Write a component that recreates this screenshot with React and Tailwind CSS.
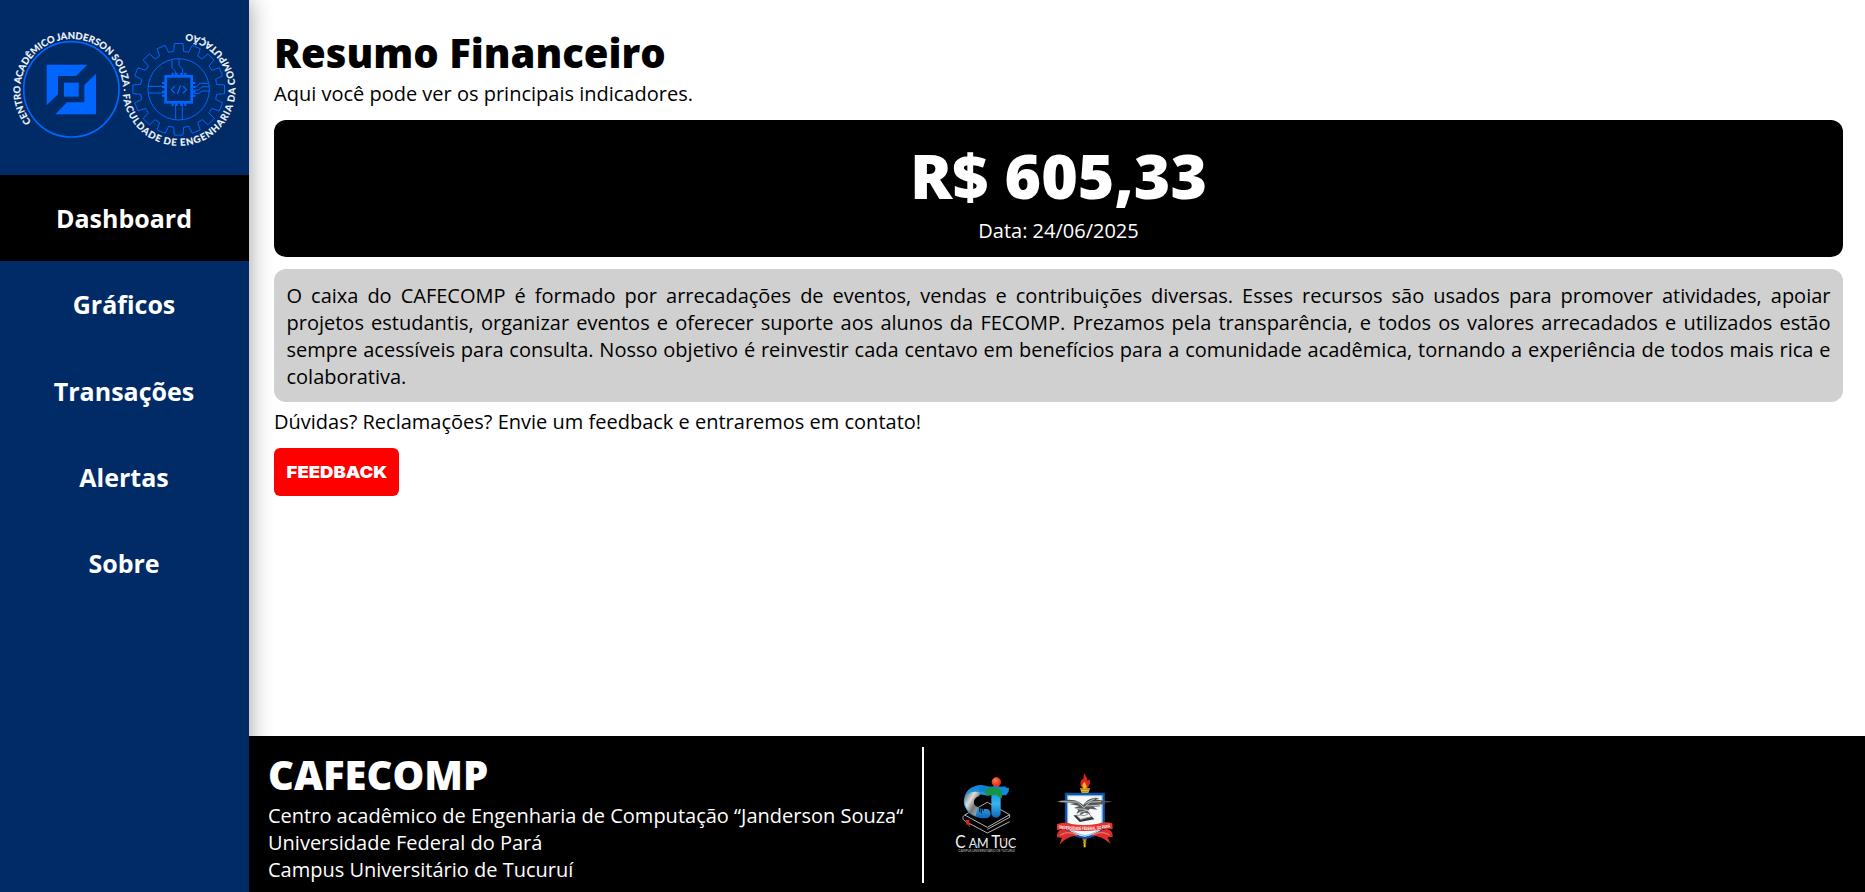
import React from "react";

const NAV = ["Dashboard", "Gráficos", "Transações", "Alertas", "Sobre"];

function gearPath(cx, cy, teeth) {
  const step = (Math.PI * 2) / teeth;
  const pts = [];
  for (let i = 0; i < teeth; i++) {
    const a = i * step - Math.PI / 2;
    [[-0.128, 115], [-0.095, 138], [0.095, 138], [0.128, 115]].forEach(([d, r]) => {
      pts.push(`${(cx + r * Math.cos(a + d)).toFixed(1)} ${(cy + r * Math.sin(a + d)).toFixed(1)}`);
    });
  }
  return `M${pts.join("L")}Z`;
}

function BrandLogo() {
  return (
    <svg className="h-[150px] w-[249px] shrink-0" viewBox="0 0 747 450" fill="none">
      <defs>
        <path id="arcLeft" d="M94 321A154 154 0 1 1 369 223" />
        <path id="arcRight" d="M368 223A169 169 0 1 0 551 55" />
      </defs>
      <g fontFamily="Lato, sans-serif" fontWeight="700" fontSize="28.5" fill="#f4f7ff" stroke="#f4f7ff" strokeWidth=".5" wordSpacing="-1.5">
        <text>
          <textPath href="#arcLeft" textLength="576" lengthAdjust="spacing">CENTRO ACADÊMICO JANDERSON SOUZA</textPath>
        </text>
        <text>
          <textPath href="#arcRight" startOffset="15" textLength="760" lengthAdjust="spacing">FACULDADE DE ENGENHARIA DA COMPUTAÇÃO</textPath>
        </text>
      </g>
      <circle cx="374" cy="225" r="3" fill="#f4f7ff" />
      <circle cx="214" cy="223" r="143" stroke="#0066ff" strokeWidth="5" />
      <g fill="#0066ff">
        <path d="M140 149H262L228 183H174V238L140 271Z" />
        <path d="M288 176V298H166L201 262H253V210Z" />
        <rect x="192" y="203" width="44" height="42" />
      </g>
      <g stroke="#0066ff" strokeWidth="3" strokeLinejoin="round">
        <path d={gearPath(536, 223, 16)} />
        <circle cx="536" cy="223" r="92" />
        <path d="M516 134V158L526 169V180M537 131V151L548 162V180M527 266V314M547 266V314M446 214H494M446 234H494" />
        <path d="M580 215H590L599 205H626M580 225H596L606 215H629M580 235H597L606 228H629" />
      </g>
      <rect x="497" y="184" width="78" height="78" stroke="#0066ff" strokeWidth="8" />
      <path d="M518 173V182M530 173V182M544 173V182M556 173V182M518 264V273M530 264V273M544 264V273M556 264V273M486 204H495M486 216H495M486 230H495M486 242H495M577 204H586M577 216H586M577 230H586M577 242H586" stroke="#0066ff" strokeWidth="6" />
      <path d="M525 213L514 224L525 235M548 213L560 224L548 235M542 211L532 237" stroke="#0066ff" strokeWidth="3.5" />
    </svg>
  );
}

function CamTucLogo() {
  return (
    <svg className="h-[80px] w-[64px]" viewBox="72 44 192 240" fill="none">
      <defs>
        <linearGradient id="steel" x1="0" y1="0" x2="1" y2="1">
          <stop offset="0" stopColor="#555" />
          <stop offset=".35" stopColor="#ddd" />
          <stop offset=".6" stopColor="#777" />
          <stop offset="1" stopColor="#bbb" />
        </linearGradient>
        <linearGradient id="sky" gradientUnits="userSpaceOnUse" x1="0" y1="80" x2="0" y2="172">
          <stop offset="0" stopColor="#1184d8" />
          <stop offset=".55" stopColor="#36b4ef" />
          <stop offset="1" stopColor="#1265b8" />
        </linearGradient>
        <radialGradient id="ball" cx=".4" cy=".35">
          <stop offset="0" stopColor="#ff8355" />
          <stop offset="1" stopColor="#e8301a" />
        </radialGradient>
      </defs>
      <path d="M104 164L172 126L239 163L172 201L104 164M104 164C95 170 98 178 106 183L172 218L239 184M239 163V171L172 207" stroke="#b5b5b5" strokeWidth="3" />
      <path d="M112 162L172 128L232 163L172 197Z" fill="#020202" />
      <path d="M171 92C148 83 124 92 118 110C109 136 127 155 156 160H168" stroke="url(#sky)" strokeWidth="28" strokeLinecap="round" />
      <path d="M138 94C115 93 103 107 104 126C106 145 119 160 137 167L143 141C133 136 130 130 132 122C135 113 140 110 148 107L150 97Z" fill="url(#steel)" />
      <path d="M148 86H228" stroke="#0c80c9" strokeWidth="15" />
      <path d="M198 90V158" stroke="url(#sky)" strokeWidth="28" strokeLinecap="round" />
      <path d="M226 82H237L236 94L228 105H208V84Z" fill="#1589d9" />
      <path d="M163 97C167 84 180 80 197 82C211 82 218 90 216 112L211 114L199 103C186 105 170 109 163 97Z" fill="#159447" />
      <path d="M149 143V155M154 146V159M160 144V152" stroke="#08131c" strokeWidth="3" />
      <circle cx="199" cy="65" r="14" fill="url(#ball)" />
      <path d="M107 178L119 180L116 185L124 193L119 195L115 190L110 195Z" fill="#e52222" />
      <path d="M110 184L119 199" stroke="#e52222" strokeWidth="3" />
      <g fill="#f2f2f2" fontFamily="Lato, sans-serif">
        <text x="76" y="264" fontSize="51" textLength="31" lengthAdjust="spacingAndGlyphs">C</text>
        <text x="116" y="264" fontSize="40" textLength="60" lengthAdjust="spacingAndGlyphs">AM</text>
        <text x="184" y="264" fontSize="51" textLength="27" lengthAdjust="spacingAndGlyphs">T</text>
        <text x="207" y="264" fontSize="40" textLength="52" lengthAdjust="spacingAndGlyphs">UC</text>
        <text x="85" y="276" fontSize="9" fillOpacity=".8" textLength="170" lengthAdjust="spacingAndGlyphs">CAMPUS UNIVERSITÁRIO DE TUCURUÍ</text>
      </g>
      <path d="M136 250L145 262" stroke="#1577d6" strokeWidth="4" />
      <path d="M222 234V243" stroke="#df2727" strokeWidth="4" />
    </svg>
  );
}

function UfpaCrest() {
  return (
    <svg className="mb-[8px] h-[76px] w-[60px]" viewBox="377 35 180 228" fill="none">
      <defs>
        <path id="motto" d="M388 201Q466 213 548 198" />
      </defs>
      <path d="M460 81C448 68 454 55 463 52C462 45 462 41 467 36C467 48 476 49 474 59L480 54C486 66 477 77 473 82Z" fill="#df2418" />
      <path d="M464 82C456 72 460 67 466 61C467 68 475 70 470 82Z" fill="#ffb52a" />
      <path d="M452 81H482L477 95H457Z" fill="#f0c82b" />
      <path d="M453 84H481M457 90H477" stroke="#815f12" strokeWidth="2" />
      <path d="M466 228V258" stroke="#e7c51e" strokeWidth="6" />
      <path d="M460 235H472M461 244H471" stroke="#a68509" strokeWidth="5" />
      <path d="M410 98H523V190C523 211 501 222 467 230C431 222 410 211 410 190Z" fill="#f7fafc" stroke="#164fa8" strokeWidth="7" />
      <path d="M415 103H518V188C518 204 497 216 467 223C435 216 415 204 415 188Z" stroke="#31a5d8" strokeWidth="2" />
      <path d="M381 121C408 114 434 113 449 122L462 131C468 119 479 112 496 109L512 110L499 114L515 117L552 121L521 124L531 128L506 130L515 135L492 136L505 145L482 142L475 150L484 158L466 154L451 162L455 151L441 157L447 146L435 139L450 134L419 128L436 126Z" fill="#56595b" />
      <path d="M391 121L444 122L464 139L482 122L515 121M440 142L467 144L482 151M471 134L508 132M467 126L497 112M450 153L476 147" stroke="#d5d7d7" strokeWidth="2.5" />
      <path d="M432 162L451 182L495 174L488 166L454 175L440 162Z" fill="#303335" />
      <path d="M440 162L454 174L487 166L478 157L465 163L454 161Z" fill="#f4f4f4" stroke="#555" strokeWidth="2" />
      <path d="M413 207C430 211 439 218 448 222C426 223 409 231 390 250L398 229L383 228C382 213 390 203 404 203ZM520 207C503 211 494 218 485 222C507 223 524 231 544 248L535 228L550 227C551 214 544 203 529 203Z" fill="#d9302f" />
      <path d="M393 221Q417 207 443 221M490 221Q514 207 540 220" stroke="#ed8580" strokeWidth="3" />
      <path d="M383 188Q410 181 426 188Q466 195 506 187Q530 179 549 186L550 203Q530 200 509 206Q467 212 425 207Q402 201 383 207Z" fill="#e5332e" />
      <text fill="#fff" fontFamily="Liberation Sans, sans-serif" fontSize="14" fontWeight="700">
        <textPath href="#motto" textLength="156" lengthAdjust="spacingAndGlyphs">UNIVERSIDADE FEDERAL DO PARÁ</textPath>
      </text>
    </svg>
  );
}

export default function App() {
  return (
    <div className="flex h-[892px] w-full overflow-hidden bg-white font-['Open_Sans',sans-serif] text-[20px] leading-[27px] text-black">
      <aside className="flex w-[249px] shrink-0 flex-col bg-[#002b66] pt-[15px] shadow-[0_0_22px_rgba(0,0,0,0.4)]">
        <BrandLogo />
        <nav className="mt-[10px] flex flex-col">
          {NAV.map((item, i) => (
            <a
              key={item}
              href="#"
              className={`flex h-[86.25px] items-center justify-center pr-px text-[25px] leading-[34px] font-bold text-white ${i === 0 ? "bg-black" : ""}`}
            >
              {item}
            </a>
          ))}
        </nav>
      </aside>

      <div className="flex min-w-0 flex-1 flex-col">
        <main className="flex flex-1 flex-col items-start pt-[25px] pr-[22px] pl-[25px]">
          <h1 className="text-[40px] leading-[55px] font-extrabold">Resumo Financeiro</h1>
          <p>Aqui você pode ver os principais indicadores.</p>
          <section className="mt-[13px] flex h-[137px] w-full flex-col items-center rounded-[12px] bg-black pt-[12px] text-white">
            <strong className="text-[62.5px] leading-[85px] font-extrabold">R$ 605,33</strong>
            <span>Data: 24/06/2025</span>
          </section>
          <p className="mt-[12px] h-[133px] w-full rounded-[12px] bg-[#d0d0d0] px-[12.5px] py-[13px] text-justify">
            O caixa do CAFECOMP é formado por arrecadações de eventos, vendas e contribuições diversas. Esses recursos
            são usados para promover atividades, apoiar projetos estudantis, organizar eventos e oferecer suporte aos
            alunos da FECOMP. Prezamos pela transparência, e todos os valores arrecadados e utilizados estão sempre
            acessíveis para consulta. Nosso objetivo é reinvestir cada centavo em benefícios para a comunidade
            acadêmica, tornando a experiência de todos mais rica e colaborativa.
          </p>
          <p className="mt-[6px]">Dúvidas? Reclamações? Envie um feedback e entraremos em contato!</p>
          <button className="mt-[13px] flex h-[48px] w-[125px] items-center justify-center rounded-[6px] bg-[#ff0000] font-['Inter',sans-serif] text-[16.5px] font-black text-white">
            <span className="scale-x-[1.12]">FEEDBACK</span>
          </button>
        </main>

        <footer className="z-10 flex h-[156px] shrink-0 items-center bg-black pt-[2px] pl-[19px] text-white">
          <div className="flex h-[136px] flex-col border-r-2 border-white pr-[19px]">
            <h2 className="text-[40px] leading-[55px] font-extrabold">CAFECOMP</h2>
            <p>Centro acadêmico de Engenharia de Computação “Janderson Souza“</p>
            <p>Universidade Federal do Pará</p>
            <p>Campus Universitário de Tucuruí</p>
          </div>
          <div className="ml-[30px] flex items-center gap-[37px]">
            <CamTucLogo />
            <UfpaCrest />
          </div>
        </footer>
      </div>
    </div>
  );
}
